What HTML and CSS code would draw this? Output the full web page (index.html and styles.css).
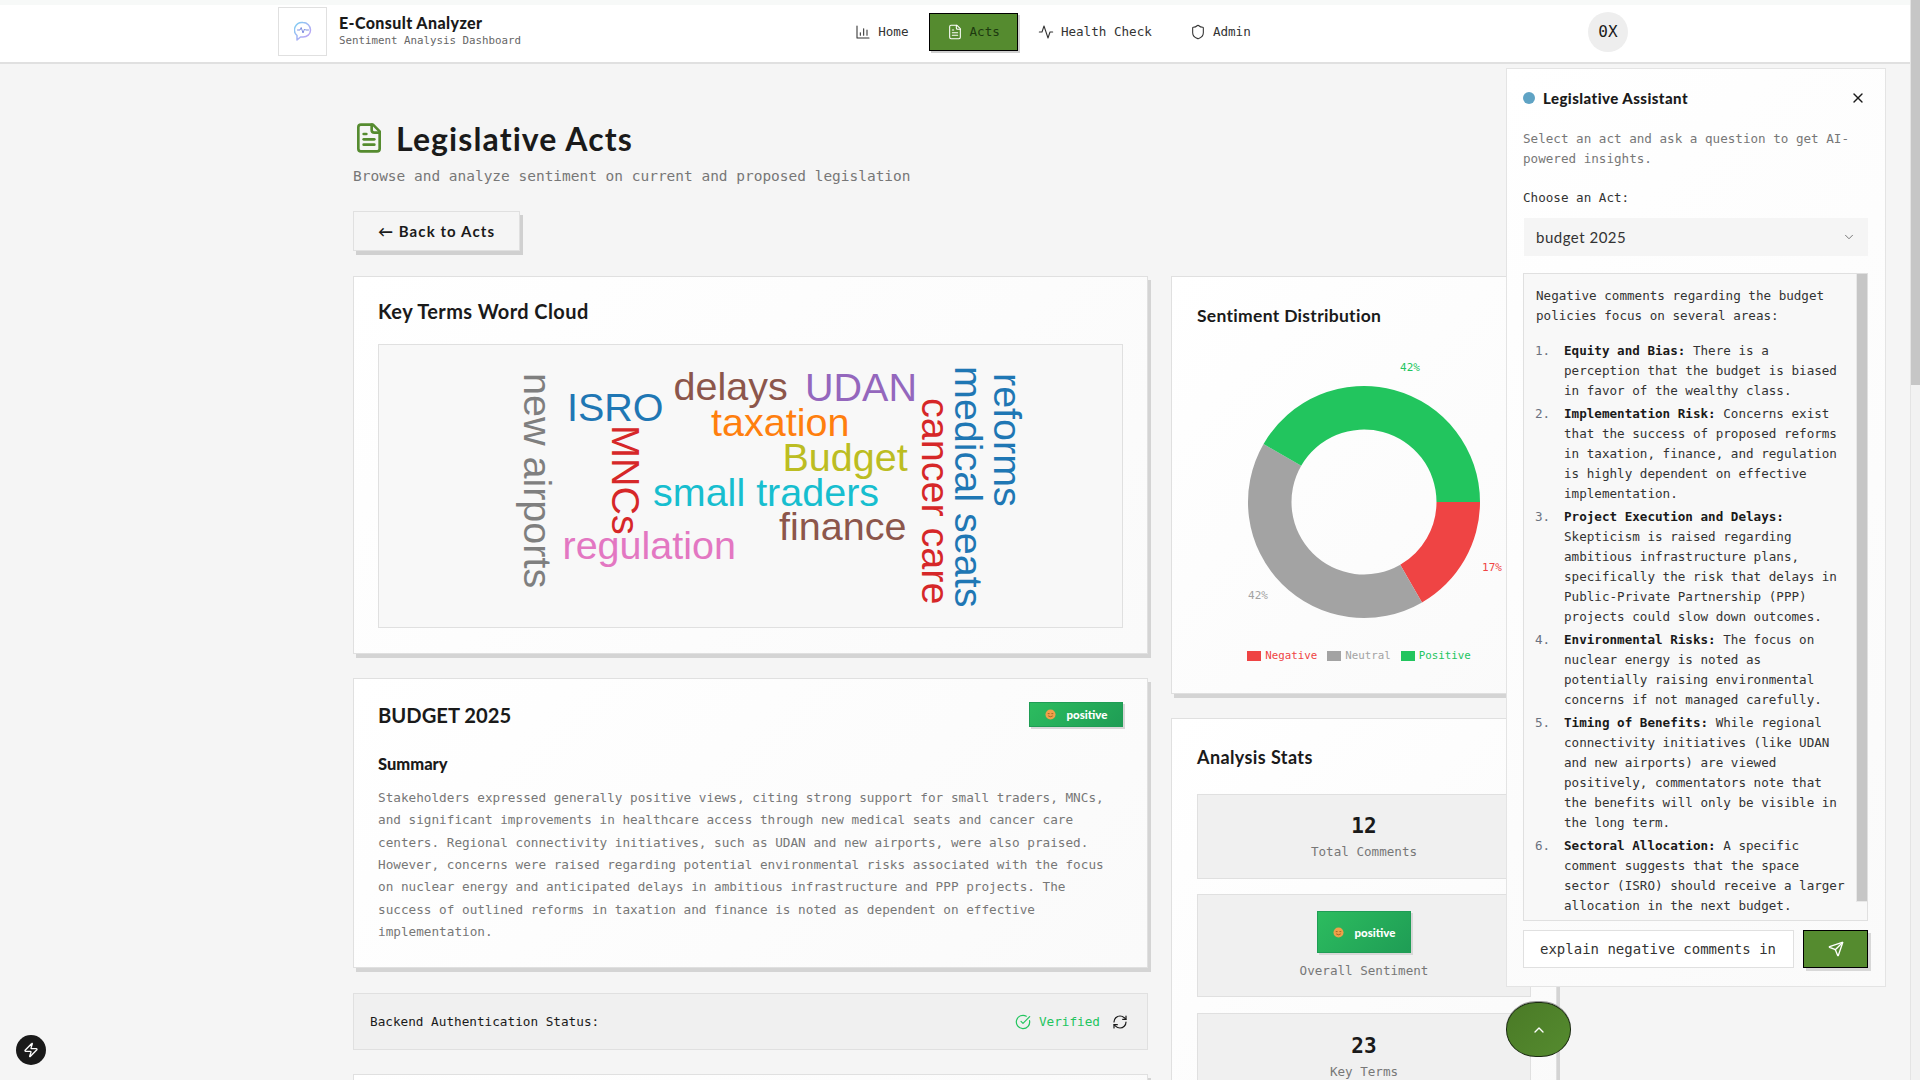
FILE: index.html
```html
<!DOCTYPE html>
<html lang="en">
<head>
    <meta charset="UTF-8">
    <meta name="viewport" content="width=device-width, initial-scale=1.0">
    <title>E-Consult Analyzer</title>
    <link rel="stylesheet" href="styles.css">
</head>
<body>
    <div class="page">
        <header class="topbar">
            <div class="brand">
                <div class="brand-logo">
                    <svg width="18" height="21" viewBox="0 0 18 21" fill="none" stroke-linejoin="round" stroke-linecap="round">
                        <defs>
                            <linearGradient id="logo-grad" x1="0" y1="0" x2="1" y2="1">
                                <stop offset="0" stop-color="#7fd0f2"/>
                                <stop offset="1" stop-color="#c79cf5"/>
                            </linearGradient>
                        </defs>
                        <path d="M9 1.500a7.500 7.500 0 0 1 7.500 7.500c0 4.500-3.500 7-7.500 7H6.500L3 19v-4.500A7.500 7.500 0 0 1 9 1.500z" stroke="url(#logo-grad)" stroke-width="1.500"/>
                        <path d="M3.500 9h2.500l1.200-2.500L9 12l1.500-4 1 1h3" stroke="#7f8fe0" stroke-width="1"/>
                    </svg>
                </div>
                <div class="brand-text">
                    <div class="brand-name">E-Consult Analyzer</div>
                    <div class="brand-sub">Sentiment Analysis Dashboard</div>
                </div>
            </div>
            <nav class="nav">
                <a class="nav-item">
                    <svg class="icon" viewBox="0 0 24 24"><path d="M3 3v18h18"/><path d="M8 17v-4"/><path d="M13 17V7"/><path d="M18 17V9"/></svg>
                    Home
                </a>
                <a class="nav-item active">
                    <svg class="icon" viewBox="0 0 24 24"><path d="M15 2H6a2 2 0 0 0-2 2v16a2 2 0 0 0 2 2h12a2 2 0 0 0 2-2V7Z"/><path d="M14 2v4a2 2 0 0 0 2 2h4"/><path d="M10 9H8"/><path d="M16 13H8"/><path d="M16 17H8"/></svg>
                    Acts
                </a>
                <a class="nav-item">
                    <svg class="icon" viewBox="0 0 24 24"><path d="M22 12h-4l-3 9L9 3l-3 9H2"/></svg>
                    Health Check
                </a>
                <a class="nav-item">
                    <svg class="icon" viewBox="0 0 24 24"><path d="M20 13c0 5-3.500 7.500-7.660 8.950a1 1 0 0 1-.67-.01C7.500 20.500 4 18 4 13V6a1 1 0 0 1 1-1c2 0 4.500-1.200 6.240-2.720a1.170 1.170 0 0 1 1.520 0C14.510 3.810 17 5 19 5a1 1 0 0 1 1 1z"/></svg>
                    Admin
                </a>
            </nav>
            <div class="avatar">0X</div>
        </header>

        <main class="main">
            <h1 class="page-title">
                <svg class="title-icon" viewBox="0 0 24 24"><path d="M15 2H6a2 2 0 0 0-2 2v16a2 2 0 0 0 2 2h12a2 2 0 0 0 2-2V7Z"/><path d="M14 2v4a2 2 0 0 0 2 2h4"/><path d="M10 9H8"/><path d="M16 13H8"/><path d="M16 17H8"/></svg>
                Legislative Acts
            </h1>
            <p class="page-sub">Browse and analyze sentiment on current and proposed legislation</p>
            <button class="back-btn">← Back to Acts</button>

            <div class="columns">
                <div class="col">
                    <section class="card cloud-card">
                        <h2 class="card-title cloud-title">Key Terms Word Cloud</h2>
                        <div class="cloud-box">
                            <svg class="cloud" width="744" height="282" viewBox="0 0 744 282">
                                <text x="294.500" y="55" fill="#8c564b">delays</text>
                                <text x="426" y="56" fill="#9467bd">UDAN</text>
                                <text x="188" y="76" fill="#1f77b4">ISRO</text>
                                <text x="332" y="91" fill="#ff7f0e">taxation</text>
                                <text x="403.500" y="126" fill="#bcbd22">Budget</text>
                                <text x="274" y="161" fill="#17becf">small traders</text>
                                <text x="400" y="195" fill="#8c564b">finance</text>
                                <text x="183.500" y="214" fill="#e377c2">regulation</text>
                                <text transform="translate(145 28) rotate(90)" fill="#7f7f7f">new airports</text>
                                <text transform="translate(233 80) rotate(90)" fill="#d62728">MNCs</text>
                                <text transform="translate(542.500 53) rotate(90)" fill="#d62728">cancer care</text>
                                <text transform="translate(575.500 21) rotate(90)" fill="#1f77b4">medical seats</text>
                                <text transform="translate(614.500 28) rotate(90)" fill="#1f77b4">reforms</text>
                            </svg>
                        </div>
                    </section>

                    <section class="card summary-card">
                        <div class="summary-head">
                            <h2 class="act-name">BUDGET 2025</h2>
                            <span class="badge">
                                <svg class="smiley" viewBox="0 0 12 12"><circle cx="6" cy="6" r="5.500" fill="#f0a04a"/><path d="M3 5h2M7 5h2" stroke="#8a5218" stroke-width=".8" fill="none"/><path d="M3.500 7.500q2.500 2 5 0" stroke="#8a5218" stroke-width=".8" fill="none"/></svg>
                                positive
                            </span>
                        </div>
                        <h3 class="summary-label">Summary</h3>
                        <p class="summary-text">Stakeholders expressed generally positive views, citing strong support for small traders, MNCs, and significant improvements in healthcare access through new medical seats and cancer care centers. Regional connectivity initiatives, such as UDAN and new airports, were also praised. However, concerns were raised regarding potential environmental risks associated with the focus on nuclear energy and anticipated delays in ambitious infrastructure and PPP projects. The success of outlined reforms in taxation and finance is noted as dependent on effective implementation.</p>
                    </section>

                    <div class="auth-row">
                        <span>Backend Authentication Status:</span>
                        <span class="auth-state">
                            <svg class="icon check" viewBox="0 0 24 24"><path d="M21.801 10A10 10 0 1 1 17 3.335"/><path d="m9 11 3 3L22 4"/></svg>
                            Verified
                            <svg class="icon refresh" viewBox="0 0 24 24"><path d="M3 12a9 9 0 0 1 9-9 9.750 9.750 0 0 1 6.740 2.740L21 8"/><path d="M21 3v5h-5"/><path d="M21 12a9 9 0 0 1-9 9 9.750 9.750 0 0 1-6.740-2.740L3 16"/><path d="M8 16H3v5"/></svg>
                        </span>
                    </div>

                    <section class="card stub-card"></section>
                </div>

                <div class="col">
                    <section class="card chart-card">
                        <h2 class="card-title chart-title">Sentiment Distribution</h2>
                        <svg class="donut" width="334" height="300" viewBox="0 0 334 300">
                            <path fill="#ef4444" d="M283 162A116 116 0 0 1 225 262.460L203.250 224.790A72.500 72.500 0 0 0 239.500 162Z"/>
                            <path fill="#a3a3a3" d="M225 262.460A116 116 0 0 1 66.540 104L104.210 125.750A72.500 72.500 0 0 0 203.250 224.790Z"/>
                            <path fill="#22c55e" d="M66.540 104A116 116 0 0 1 283 162L239.500 162A72.500 72.500 0 0 0 104.210 125.750Z"/>
                            <text x="213" y="31" fill="#22c55e">42%</text>
                            <text x="295" y="231" fill="#ef4444">17%</text>
                            <text x="61" y="259" fill="#a3a3a3">42%</text>
                        </svg>
                        <div class="legend">
                            <span class="legend-item negative"><i></i>Negative</span>
                            <span class="legend-item neutral"><i></i>Neutral</span>
                            <span class="legend-item positive"><i></i>Positive</span>
                        </div>
                    </section>

                    <section class="card stats-card">
                        <h2 class="card-title stats-title">Analysis Stats</h2>
                        <div class="stat">
                            <div class="stat-value">12</div>
                            <div class="stat-label">Total Comments</div>
                        </div>
                        <div class="stat stat-badge">
                            <span class="badge badge-large">
                                <svg class="smiley" viewBox="0 0 12 12"><circle cx="6" cy="6" r="5.500" fill="#f0a04a"/><path d="M3 5h2M7 5h2" stroke="#8a5218" stroke-width=".8" fill="none"/><path d="M3.500 7.500q2.500 2 5 0" stroke="#8a5218" stroke-width=".8" fill="none"/></svg>
                                positive
                            </span>
                            <div class="stat-label">Overall Sentiment</div>
                        </div>
                        <div class="stat stat-terms">
                            <div class="stat-value">23</div>
                            <div class="stat-label">Key Terms</div>
                        </div>
                    </section>
                </div>
            </div>
        </main>
    </div>

    <!-- page scrollbar -->
    <div class="scrollbar"><div class="scrollbar-thumb"></div></div>

    <aside class="assistant">
        <div class="assistant-head">
            <span class="dot"></span>
            <h2 class="assistant-title">Legislative Assistant</h2>
            <svg class="icon close" viewBox="0 0 24 24"><path d="M18 6 6 18"/><path d="m6 6 12 12"/></svg>
        </div>
        <p class="assistant-desc">Select an act and ask a question to get AI-powered insights.</p>
        <div class="assistant-label">Choose an Act:</div>
        <div class="select">
            budget 2025
            <svg class="icon chevron" viewBox="0 0 24 24"><path d="m6 9 6 6 6-6"/></svg>
        </div>
        <div class="answer">
            <div class="answer-thumb"></div>
            <p>Negative comments regarding the budget policies focus on several areas:</p>
            <ol>
                <li><b>Equity and Bias:</b> There is a perception that the budget is biased in favor of the wealthy class.</li>
                <li><b>Implementation Risk:</b> Concerns exist that the success of proposed reforms in taxation, finance, and regulation is highly dependent on effective implementation.</li>
                <li><b>Project Execution and Delays:</b> Skepticism is raised regarding ambitious infrastructure plans, specifically the risk that delays in Public-Private Partnership (PPP) projects could slow down outcomes.</li>
                <li><b>Environmental Risks:</b> The focus on nuclear energy is noted as potentially raising environmental concerns if not managed carefully.</li>
                <li><b>Timing of Benefits:</b> While regional connectivity initiatives (like UDAN and new airports) are viewed positively, commentators note that the benefits will only be visible in the long term.</li>
                <li><b>Sectoral Allocation:</b> A specific comment suggests that the space sector (ISRO) should receive a larger allocation in the next budget.</li>
            </ol>
        </div>
        <div class="ask-row">
            <div class="ask-input">explain negative comments in</div>
            <button class="ask-send">
                <svg class="icon" viewBox="0 0 24 24"><path d="M14.536 21.686a.5.5 0 0 0 .937-.024l6.500-19a.496.496 0 0 0-.635-.635l-19 6.500a.5.5 0 0 0-.024.937l7.930 3.180a2 2 0 0 1 1.112 1.110z"/><path d="m21.854 2.147-10.940 10.939"/></svg>
            </button>
        </div>
    </aside>

    <button class="assistant-toggle">
        <svg class="icon" viewBox="0 0 24 24"><path d="m18 15-6-6-6 6"/></svg>
    </button>

    <button class="bolt">
        <svg class="icon" viewBox="0 0 24 24"><path d="M4 14a1 1 0 0 1-.78-1.630l9.900-10.200a.5.5 0 0 1 .86.460l-1.920 6.020A1 1 0 0 0 13 10h7a1 1 0 0 1 .78 1.630l-9.900 10.200a.5.5 0 0 1-.86-.460l1.920-6.020A1 1 0 0 0 11 14z"/></svg>
    </button>
</body>
</html>
```

FILE: styles.css
```css
* {
    box-sizing: border-box;
}
html, body {
    margin: 0;
    height: 1080px;
    overflow: hidden;
}
body {
    background: #f5f5f5;
    color: #1a1a1a;
    font-family: "DejaVu Sans Mono", monospace;
    font-size: 12.6px;
}
h1, h2, h3, p {
    margin: 0;
}
button {
    font: inherit;
    cursor: pointer;
}
.icon {
    width: 16px;
    height: 16px;
    fill: none;
    stroke: currentColor;
    stroke-width: 2;
    stroke-linecap: round;
    stroke-linejoin: round;
    flex: none;
}
.page {
    width: 1910px;
}

/* top bar */
.topbar {
    height: 64px;
    padding: 1px 282px 0 278px;
    display: flex;
    align-items: center;
    justify-content: space-between;
    background: linear-gradient(#f7f9f8 0, #f7f9f8 5px, #fff 5px);
    border-bottom: 2px solid #e0e0e0;
}
.brand {
    display: flex;
    align-items: center;
    gap: 12px;
    width: 244px;
}
.brand-logo {
    width: 49px;
    height: 49px;
    display: flex;
    align-items: center;
    justify-content: center;
    background: #fff;
    border: 1px solid #e0e0e0;
}
.brand-text {
    margin-top: -2px;
}
.brand-name {
    font-family: "Lato", sans-serif;
    font-weight: 900;
    font-size: 16px;
    line-height: 21px;
    letter-spacing: 0.4px;
}
.brand-sub {
    font-size: 10.8px;
    line-height: 16px;
    color: #666;
}
.nav {
    display: flex;
    align-items: center;
    gap: 2px;
    margin-right: 4px;
    color: #333;
}
.nav-item {
    display: flex;
    align-items: center;
    gap: 7px;
    height: 38px;
    padding: 0 18px;
}
.nav-item .icon {
    stroke-width: 1.6;
}
.nav-item.active {
    background: #558b2f;
    border: 1px solid #000;
    box-shadow: 2px 2px 0 #cfcfcf;
    padding: 0 17px;
    color: #1d3a10;
}
.nav-item.active .icon {
    color: #fff;
}
.avatar {
    width: 40px;
    height: 40px;
    border-radius: 50%;
    background: #eeeeee;
    display: flex;
    align-items: center;
    justify-content: center;
    font-size: 16px;
}

/* main column */
.main {
    width: 1204px;
    margin: 0 auto;
    padding-top: 54px;
}
.page-title {
    display: flex;
    align-items: center;
    gap: 11px;
    height: 40px;
    font-family: "Lato", sans-serif;
    font-weight: 700;
    font-size: 32px;
    letter-spacing: 1.1px;
}
.title-icon {
    width: 32px;
    height: 32px;
    fill: none;
    stroke: #558b2f;
    stroke-width: 2;
    stroke-linecap: round;
    stroke-linejoin: round;
}
.page-sub {
    margin-top: 7px;
    line-height: 22px;
    font-size: 14.47px;
    color: #777;
}
.back-btn {
    display: block;
    margin-top: 24px;
    width: 167px;
    height: 40px;
    background: #f5f5f5;
    border: 1px solid #e0e0e0;
    box-shadow: 3px 4px 0 #d0d0d0;
    font-family: "Lato", sans-serif;
    font-weight: 700;
    font-size: 15px;
    letter-spacing: 1.1px;
    color: #1a1a1a;
}
.columns {
    display: grid;
    grid-template-columns: 795px 386px;
    gap: 23px;
    margin-top: 25px;
}
.col {
    display: flex;
    flex-direction: column;
    gap: 24px;
}
.card {
    background: linear-gradient(135deg, #fff, #fafafa);
    border: 1px solid #e0e0e0;
    box-shadow: 3px 4px 0 #d4d4d4;
    padding: 24px;
}
.card-title {
    font-family: "Lato", sans-serif;
    font-weight: 700;
    font-size: 18px;
    letter-spacing: 0.4px;
    line-height: 22px;
}

/* word cloud */
.cloud-card {
    height: 378px;
    padding-top: 23px;
}
.cloud-title {
    font-size: 20px;
    margin-bottom: 22px;
}
.cloud-box {
    height: 284px;
    background: #f8f8f8;
    border: 1px solid #e0e0e0;
}
.cloud {
    display: block;
    font-family: "Liberation Sans", Arial, sans-serif;
    font-size: 39.5px;
}

/* summary */
.summary-card {
    height: 290px;
}
.summary-head {
    display: flex;
    align-items: flex-start;
    justify-content: space-between;
    height: 51px;
}
.act-name {
    font-family: "Lato", sans-serif;
    font-weight: 700;
    font-size: 20.2px;
    line-height: 24px;
}
.badge {
    display: inline-flex;
    align-items: center;
    justify-content: center;
    gap: 11px;
    width: 94px;
    height: 25px;
    background: linear-gradient(135deg, #2cbc5f, #1f9d55);
    border: 1px solid #1f9d55;
    box-shadow: 2px 2px 0 #d8d8d8;
    font-family: "Lato", sans-serif;
    font-weight: 900;
    font-size: 11.5px;
    color: #fff;
}
.summary-head .badge {
    margin-top: -1px;
}
.badge-large {
    height: 42px;
}
.smiley {
    width: 11px;
    height: 11px;
}
.summary-label {
    font-family: "Lato", sans-serif;
    font-weight: 900;
    font-size: 16.5px;
    line-height: 20px;
}
.summary-text {
    margin-top: 13px;
    font-size: 12.7px;
    line-height: 22.35px;
    color: #777;
}
.auth-row {
    display: flex;
    align-items: center;
    justify-content: space-between;
    height: 57px;
    padding: 0 19px 0 16px;
    margin-top: 1px;
    background: #f0f0f0;
    border: 1px solid #e0e0e0;
    font-size: 12.7px;
}
.auth-state {
    display: flex;
    align-items: center;
    gap: 5px;
    color: #22c55e;
}
.auth-state .icon {
    stroke-width: 1.8;
}
.auth-state .check {
    margin-right: 3px;
}
.auth-state .refresh {
    margin-left: 7px;
    color: #1a1a1a;
}
.stub-card {
    height: 60px;
    padding: 0;
}

/* chart */
.chart-card {
    height: 418px;
    padding: 27px 25px 0;
}
.chart-title {
    font-size: 17.5px;
    letter-spacing: 0.3px;
    line-height: 24px;
}
.donut {
    display: block;
    margin-top: 12px;
    font-size: 11px;
    text-anchor: middle;
}
.legend {
    display: flex;
    justify-content: center;
    gap: 10px;
    margin-top: 8px;
    padding-right: 10px;
    font-size: 10.8px;
    line-height: 16px;
}
.legend-item {
    display: flex;
    align-items: center;
    gap: 4px;
}
.legend-item i {
    width: 14px;
    height: 10px;
}
.negative { color: #ef4444; }
.negative i { background: #ef4444; }
.neutral { color: #a3a3a3; }
.neutral i { background: #a3a3a3; }
.positive { color: #22c55e; }
.positive i { background: #22c55e; }

/* stats */
.stats-card {
    padding: 27px 25px 0;
    height: 400px;
}
.stats-title {
    margin-bottom: 26px;
}
.stat {
    height: 85px;
    margin-bottom: 15px;
    padding-top: 18px;
    background: #f0f0f0;
    border: 1px solid #e0e0e0;
    text-align: center;
}
.stat-badge {
    height: 103px;
    margin-bottom: 16px;
    padding-top: 16px;
}
.stat-terms {
    padding-top: 19px;
}
.stat-value {
    font-size: 21px;
    font-weight: 700;
    line-height: 26px;
}
.stat-label {
    margin-top: 3px;
    color: #777;
    line-height: 20px;
}
.stat-badge .stat-label {
    margin-top: 8px;
}

/* floating bits */
.scrollbar {
    position: fixed;
    top: 0;
    right: 0;
    width: 10px;
    height: 1080px;
    background: #f2f2f2;
    border-left: 1px solid #e4e4e4;
}
.scrollbar-thumb {
    height: 385px;
    background: #c6c6c6;
}
.assistant {
    position: fixed;
    left: 1506px;
    top: 68px;
    width: 380px;
    height: 919px;
    padding: 16px 17px 16px 16px;
    background: linear-gradient(135deg, #fff, #fafafa);
    border: 1px solid #e4e4e4;
}
.assistant-head {
    display: flex;
    align-items: center;
    gap: 8px;
    height: 26px;
}
.dot {
    width: 12px;
    height: 12px;
    border-radius: 50%;
    background: #5fa3c4;
}
.assistant-title {
    flex: 1;
    font-family: "Lato", sans-serif;
    font-weight: 900;
    font-size: 15px;
    letter-spacing: 0.45px;
}
.close {
    margin-right: 2px;
}
.assistant-desc {
    margin-top: 18px;
    line-height: 20px;
    color: #777;
}
.assistant-label {
    margin-top: 19px;
    line-height: 20px;
    color: #333;
}
.select {
    display: flex;
    align-items: center;
    justify-content: space-between;
    height: 38px;
    margin: 10px 0 0 1px;
    padding: 0 12px;
    background: #f5f5f5;
    font-family: "Lato", sans-serif;
    font-size: 15px;
    letter-spacing: 0.5px;
    color: #333;
}
.chevron {
    color: #666;
    width: 14px;
    height: 14px;
    stroke-width: 1.5;
}
.answer {
    position: relative;
    height: 648px;
    margin-top: 17px;
    padding: 12px 20px 0 12px;
    background: #f8f8f8;
    border: 1px solid #e0e0e0;
    overflow: hidden;
    line-height: 20px;
    color: #333;
    counter-reset: step;
}
.answer b {
    color: #1a1a1a;
}
.answer-thumb {
    position: absolute;
    top: 0;
    right: 0;
    width: 10px;
    height: 627px;
    background: #c6c6c6;
    outline: 1px solid #e8e8e8;
}
.answer ol {
    margin: 15px 0 0;
    padding-left: 28px;
    list-style: none;
}
.answer li {
    position: relative;
    margin-bottom: 3px;
    counter-increment: step;
}
.answer li::before {
    content: counter(step) ".";
    position: absolute;
    left: -29px;
    color: #6b7280;
}
.ask-row {
    display: flex;
    gap: 9px;
    margin-top: 9px;
}
.ask-input {
    flex: 1;
    height: 38px;
    padding: 0 16px;
    display: flex;
    align-items: center;
    background: #fff;
    border: 1px solid #e0e0e0;
    font-size: 14px;
    color: #333;
    white-space: nowrap;
    overflow: hidden;
}
.ask-send {
    width: 65px;
    height: 38px;
    display: flex;
    align-items: center;
    justify-content: center;
    background: #558b2f;
    border: 1px solid #000;
    box-shadow: 3px 3px 0 #d8d8d8;
    color: #fff;
}
.assistant-toggle {
    position: fixed;
    left: 1506px;
    top: 1002px;
    width: 65px;
    height: 55px;
    border-radius: 30px / 27px;
    display: flex;
    align-items: center;
    justify-content: center;
    background: linear-gradient(135deg, #4a7a26, #558b2f);
    border: 1px solid #1a2a10;
    box-shadow: 0 -1px 0 #999;
    color: #fff;
    padding: 0;
}
.bolt {
    position: fixed;
    left: 16px;
    top: 1035px;
    width: 30px;
    height: 30px;
    padding: 0;
    border: none;
    border-radius: 50%;
    display: flex;
    align-items: center;
    justify-content: center;
    background: #1a1a1a;
    color: #fff;
}
```
